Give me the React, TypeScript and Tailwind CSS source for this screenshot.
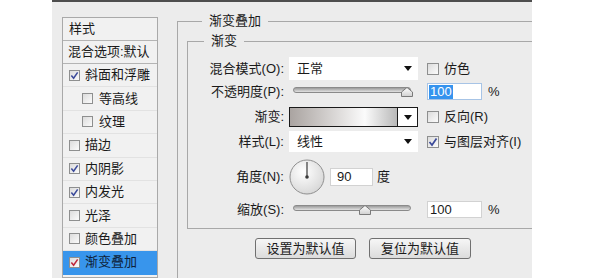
import React from 'react';

const FONT = "font-['Liberation_Sans','Noto_Sans_CJK_SC',sans-serif]";

interface LayerStyle {
  label: string;
  checked: boolean;
  indent?: boolean;
  selected?: boolean;
}

const LAYER_STYLES: LayerStyle[] = [
  { label: '斜面和浮雕', checked: true },
  { label: '等高线', checked: false, indent: true },
  { label: '纹理', checked: false, indent: true },
  { label: '描边', checked: false },
  { label: '内阴影', checked: true },
  { label: '内发光', checked: true },
  { label: '光泽', checked: false },
  { label: '颜色叠加', checked: false },
  { label: '渐变叠加', checked: true, selected: true },
];

function CheckBox({ checked, size = 11, red = false }: { checked: boolean; size?: number; red?: boolean }) {
  return (
    <span
      className="shrink-0 border border-[#8e8f8f] bg-gradient-to-br from-[#dcdcdc] to-[#fbfbfb] flex items-center justify-center"
      style={{ width: size, height: size }}
    >
      {checked && (
        <svg width={size - 2} height={size - 2} viewBox="0 0 10 10">
          <path d="M1.5 5 L4 8 L8.5 1.5" fill="none" stroke={red ? '#c0263a' : '#3b4a9a'} strokeWidth="1.7" />
        </svg>
      )}
    </span>
  );
}

function DownArrow() {
  return (
    <svg width="8" height="5" viewBox="0 0 8 5">
      <path d="M0 0 H8 L4 5 Z" fill="#111" />
    </svg>
  );
}

function Slider({ pos }: { pos: number }) {
  return (
    <div className="relative w-[129px] h-full">
      <div className="absolute left-[4px] top-[4px] w-[118px] h-[6px] rounded-full border border-[#8a8a8a] bg-gradient-to-b from-[#9c9c9c] to-[#e2e2e2]" />
      <svg className="absolute top-[4px]" style={{ left: pos }} width="12" height="10" viewBox="0 0 12 10">
        <defs>
          <linearGradient id="thumb" x1="0" y1="0" x2="0" y2="1">
            <stop offset="0" stopColor="#ffffff" />
            <stop offset="1" stopColor="#d0d0d0" />
          </linearGradient>
        </defs>
        <path d="M0.5 9.5 V5 L6 0.5 L11.5 5 V9.5 Z" fill="url(#thumb)" stroke="#7a7a7a" />
      </svg>
    </div>
  );
}

function Label({ children }: { children: React.ReactNode }) {
  return <div className="w-[97px] shrink-0 text-right pr-[1px]">{children}</div>;
}

export default function App() {
  return (
    <div className={`w-[595px] h-[278px] bg-white overflow-hidden text-[13px] leading-[16px] text-[#1a1a1a] ${FONT}`}>
      <div className="ml-[52px] w-[480px] h-full bg-[#ececec] border-t-2 border-[#4e4e4e] flex">
        {/* Style list */}
        <div className="ml-[10px] mt-[15px] w-[96px] shrink-0 self-stretch border border-[#a9a9a9] bg-[#f1f1f1]">
          <div className="h-[23px] border-b border-[#b4b4b4] pl-[6px] flex items-center">样式</div>
          <div className="h-[23px] border-b border-[#b4b4b4] pl-[5px] flex items-center whitespace-nowrap">混合选项:默认</div>
          {LAYER_STYLES.map((s) => (
            <div
              key={s.label}
              className={`h-[23.4px] border-b flex items-center whitespace-nowrap ${
                s.selected ? 'bg-[#3895ec] border-[#3895ec] text-[#0e1f3a]' : 'border-[#e2e2e2]'
              } ${s.indent ? 'pl-[19px] gap-[6px]' : 'pl-[6px] gap-[5px]'}`}
            >
              <CheckBox checked={s.checked} red={s.selected} />
              <span>{s.label}</span>
            </div>
          ))}
          <div className="h-[23px] border-b border-[#e2e2e2]" />
        </div>

        {/* Gradient overlay group */}
        <fieldset className="ml-[19px] mt-[11px] flex-1 min-w-0 border border-r-0 border-b-0 border-[#a8a8a8] pl-[9px] pt-[4px]">
          <legend className="ml-[15px] px-[7px] leading-[16px]">渐变叠加</legend>

          <fieldset className="border border-r-0 border-[#a8a8a8] pb-[10px]">
            <legend className="ml-[16px] px-[7px] leading-[16px]">渐变</legend>

            <div className="flex items-center h-[23px] mt-[8px]">
              <Label>混合模式(O):</Label>
              <div className="ml-[4px] w-[129px] h-full bg-white flex items-center justify-between pl-[8px] pr-[6px]">
                <span>正常</span>
                <DownArrow />
              </div>
              <div className="ml-[9px] flex items-center gap-[5px]">
                <CheckBox checked={false} size={12} />
                <span>仿色</span>
              </div>
            </div>

            <div className="flex items-center h-[17px] mt-[3px]">
              <Label>不透明度(P):</Label>
              <div className="ml-[4px] h-full">
                <Slider pos={112} />
              </div>
              <div className="ml-[9px] w-[55px] h-full bg-white border border-[#a7c4e6] flex items-center pl-[1px]">
                <span className="bg-[#3593ee] text-white px-[1px] leading-[14px]">100</span>
              </div>
              <span className="ml-[6px]">%</span>
            </div>

            <div className="flex items-center h-[20px] mt-[7px]">
              <Label>渐变:</Label>
              <div className="ml-[4px] w-[129px] h-full border border-[#1a1a1a] flex">
                <div className="flex-1 bg-gradient-to-r from-[#aaa4a1] via-[#fbfbfb] via-70% to-[#b9b9b9]" />
                <div className="w-[20px] border-l border-[#1a1a1a] bg-white flex items-center justify-center">
                  <DownArrow />
                </div>
              </div>
              <div className="ml-[9px] flex items-center gap-[5px]">
                <CheckBox checked={false} size={12} />
                <span>反向(R)</span>
              </div>
            </div>

            <div className="flex items-center h-[21px] mt-[4px]">
              <Label>样式(L):</Label>
              <div className="ml-[4px] w-[129px] h-full bg-white flex items-center justify-between pl-[8px] pr-[6px]">
                <span>线性</span>
                <DownArrow />
              </div>
              <div className="ml-[9px] flex items-center gap-[5px]">
                <CheckBox checked size={12} />
                <span>与图层对齐(I)</span>
              </div>
            </div>

            <div className="flex items-center h-[34px] mt-[8px]">
              <Label>角度(N):</Label>
              <svg className="ml-[4px]" width="36" height="36" viewBox="0 0 36 36">
                <defs>
                  <radialGradient id="dial" cx="0.4" cy="0.35" r="0.7">
                    <stop offset="0" stopColor="#ffffff" />
                    <stop offset="1" stopColor="#d6d6d6" />
                  </radialGradient>
                </defs>
                <circle cx="18" cy="18" r="17" fill="url(#dial)" stroke="#8f8f8f" />
                <line x1="18" y1="18" x2="18" y2="3" stroke="#3a3a3a" strokeWidth="1.2" />
                <circle cx="18" cy="18" r="1.8" fill="#3a3a3a" />
              </svg>
              <div className="ml-[5px] w-[43px] h-[18px] bg-white border border-[#d2d2d2] flex items-center pl-[6px]">90</div>
              <span className="ml-[4px]">度</span>
            </div>

            <div className="flex items-center h-[17px] mt-[7px]">
              <Label>缩放(S):</Label>
              <div className="ml-[4px] h-full">
                <Slider pos={70} />
              </div>
              <div className="ml-[9px] w-[55px] h-full bg-white border border-[#d2d2d2] flex items-center pl-[2px]">100</div>
              <span className="ml-[6px]">%</span>
            </div>
          </fieldset>

          <div className="flex gap-[13px] ml-[68px] mt-[9px]">
            <button className="w-[101px] h-[21px] rounded-[3px] border border-[#707070] bg-gradient-to-b from-[#f6f6f6] to-[#dcdcdc] text-[13px]">
              设置为默认值
            </button>
            <button className="w-[102px] h-[21px] rounded-[3px] border border-[#707070] bg-gradient-to-b from-[#f6f6f6] to-[#dcdcdc] text-[13px]">
              复位为默认值
            </button>
          </div>
        </fieldset>
      </div>
    </div>
  );
}
